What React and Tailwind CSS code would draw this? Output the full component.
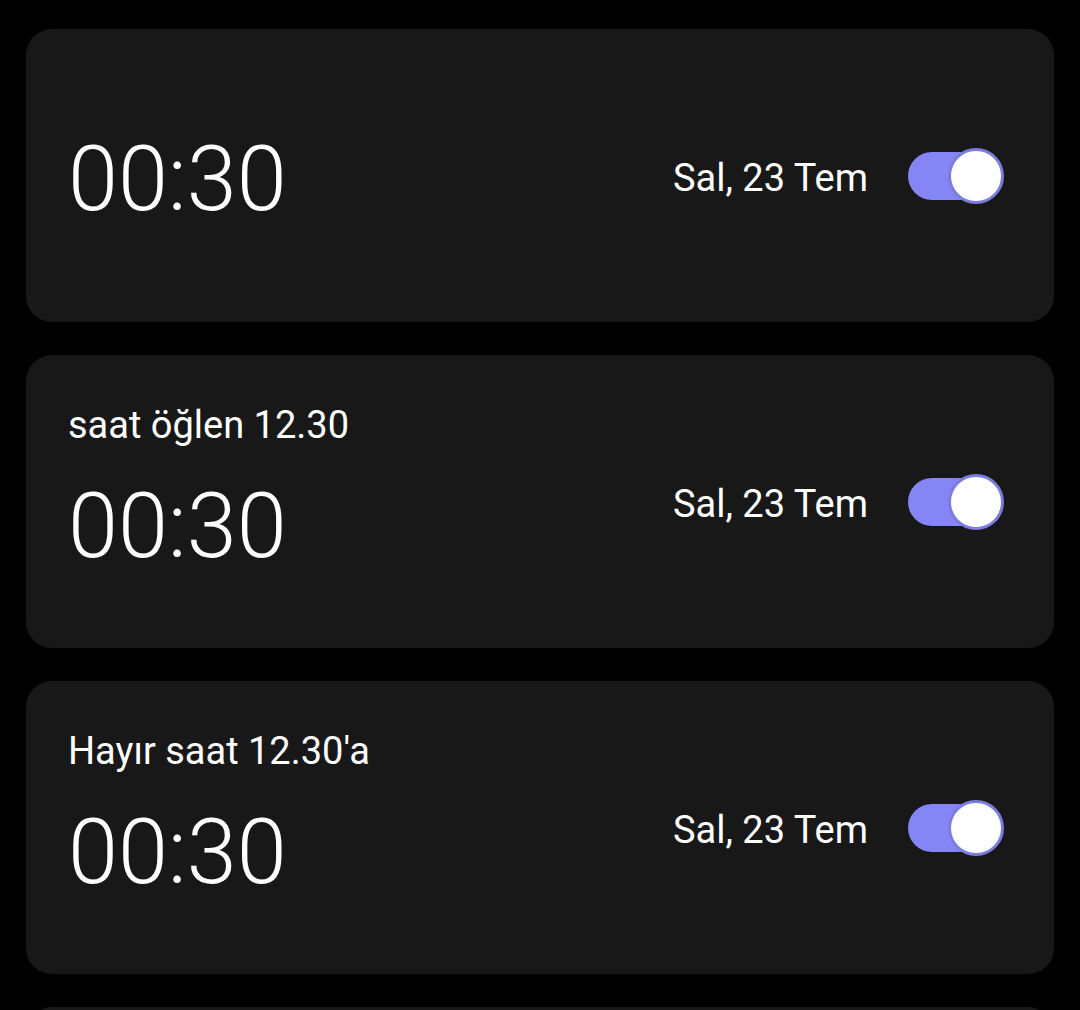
import React from 'react';

const alarms = [
    { id: 1, label: null, time: '00:30', date: 'Sal, 23 Tem', on: true },
    { id: 2, label: 'saat öğlen 12.30', time: '00:30', date: 'Sal, 23 Tem', on: true },
    { id: 3, label: "Hayır saat 12.30'a", time: '00:30', date: 'Sal, 23 Tem', on: true },
];

const Toggle = () => (
    <div className="relative h-[48px] w-[96px]">
        <div className="absolute left-0 top-0 h-[48px] w-[90px] rounded-full bg-[#8585f6]" />
        <div className="absolute right-0 top-[-4px] h-[56px] w-[56px] rounded-full border-[3px] border-[#7c7cde] bg-white" />
    </div>
);

const AlarmCard = ({ alarm }) => (
    <div className="flex h-[293px] shrink-0 items-center justify-between rounded-[26px] bg-[#181818] pl-[42px] pr-[50px]">
        <div className="flex flex-col">
            {alarm.label && (
                <div className="mb-[3px] text-[38px] leading-[40px] text-white">{alarm.label}</div>
            )}
            <div className="flex h-[150px] items-center pt-[8px] text-[90px] font-light leading-none text-white">
                {alarm.time}
            </div>
        </div>
        <div className="flex items-center gap-[40px]">
            <span className="pt-[5px] text-[38px] text-white">{alarm.date}</span>
            <Toggle />
        </div>
    </div>
);

export default function App() {
    return (
        <div
            className="flex h-[1010px] flex-col gap-[33px] overflow-hidden bg-black px-[26px] pt-[29px]"
            style={{ fontFamily: 'Roboto, "Noto Sans", sans-serif' }}
        >
            {alarms.map(a => (
                <AlarmCard key={a.id} alarm={a} />
            ))}
            {/* next alarm card, scrolled mostly out of view */}
            <div className="h-[293px] shrink-0 rounded-[26px] bg-[#181818]" />
        </div>
    );
}
